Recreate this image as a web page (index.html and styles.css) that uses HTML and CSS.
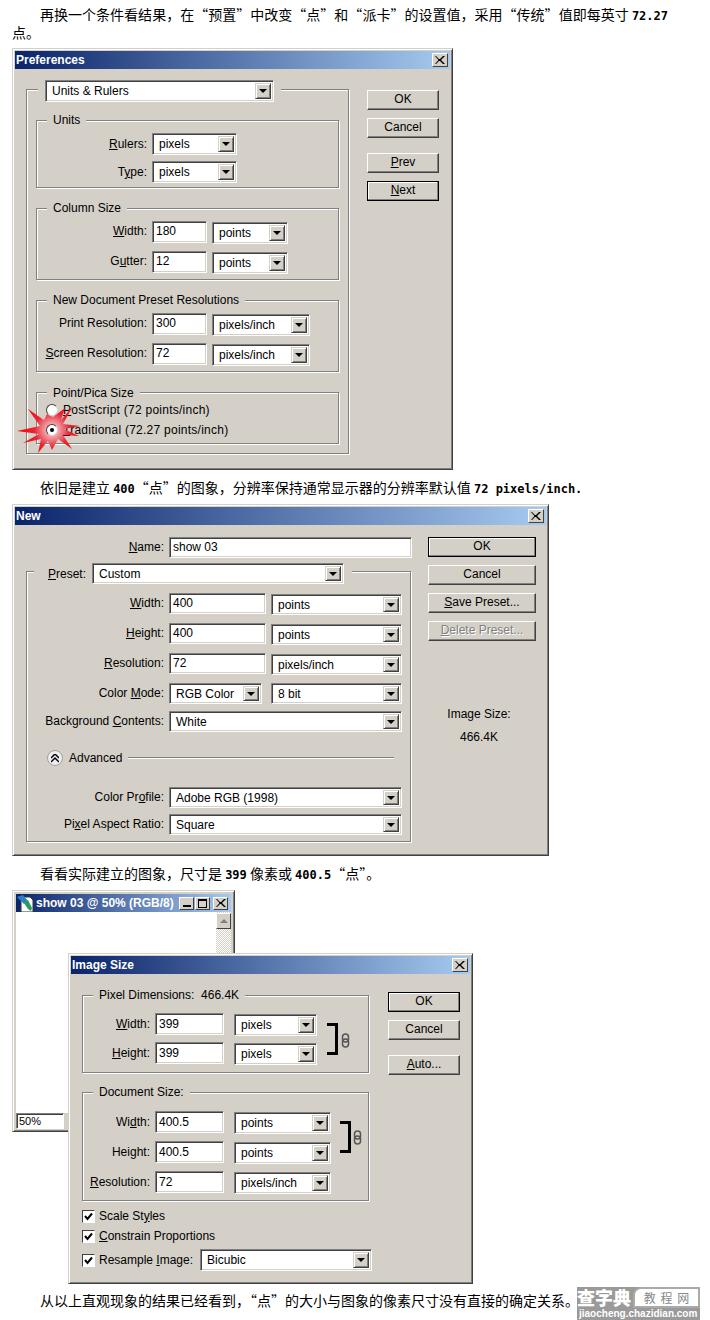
FILE: index.html
```html
<!DOCTYPE html>
<html lang="zh-CN">
<head>
  <meta charset="UTF-8">
  <title>点和像素</title>
  <link rel="stylesheet" href="styles.css">
</head>
<body>
  <p class="para para-first">再换一个条件看结果，在“预置”中改变“点”和“派卡”的设置值，采用“传统”值即每英寸 <b>72.27</b> 点。</p>

  <!-- Preferences -->
  <div class="dialog dialog-prefs">
    <div class="titlebar"><span>Preferences</span><i class="close"><svg width="10" height="8" viewBox="0 0 10 8"><path d="M1 0l3 3h1l3-3h2L6 4l4 4H8L5 5H4L1 8H0l3.500-4L0 0z"/></svg></i></div>
    <div class="dialog-body">
      <div class="group outer prefs-outer">
        <div class="legend legend-select">
          <div class="select w-229"><span>Units &amp; Rulers</span><i class="arrow"></i></div>
        </div>
        <div class="group prefs-group first">
          <div class="legend">Units</div>
          <div class="row"><label class="label l-110"><u>R</u>ulers:</label><div class="select w-85"><span>pixels</span><i class="arrow"></i></div></div>
          <div class="row"><label class="label l-110">T<u>y</u>pe:</label><div class="select w-85"><span>pixels</span><i class="arrow"></i></div></div>
        </div>
        <div class="group prefs-group">
          <div class="legend">Column Size</div>
          <div class="row"><label class="label l-110"><u>W</u>idth:</label><div class="input w-55">180</div><div class="select w-76 low"><span>points</span><i class="arrow"></i></div></div>
          <div class="row"><label class="label l-110">G<u>u</u>tter:</label><div class="input w-55">12</div><div class="select w-76 low"><span>points</span><i class="arrow"></i></div></div>
        </div>
        <div class="group prefs-group">
          <div class="legend">New Document Preset Resolutions</div>
          <div class="row"><label class="label l-110">Print Resolution:</label><div class="input w-55">300</div><div class="select w-98 low"><span>pixels/inch</span><i class="arrow"></i></div></div>
          <div class="row"><label class="label l-110"><u>S</u>creen Resolution:</label><div class="input w-55">72</div><div class="select w-98 low"><span>pixels/inch</span><i class="arrow"></i></div></div>
        </div>
        <div class="group prefs-group radios">
          <div class="legend">Point/Pica Size</div>
          <div class="radio-row"><i class="radio"></i><span><u>P</u>ostScript (72 points/inch)</span></div>
          <div class="radio-row">
            <svg class="star" width="64" height="48" viewBox="0 0 64 48">
              <defs><radialGradient id="burst" cx="35" cy="24" r="32" gradientUnits="userSpaceOnUse"><stop offset="0" stop-color="#fbe4e4"/><stop offset=".3" stop-color="#ee8088"/><stop offset=".55" stop-color="#ea2434"/><stop offset="1" stop-color="#ff0000"/></radialGradient></defs>
              <polygon fill="url(#burst)" points="0,25 23,20 11,3 27,14 30,8 36,11 48,2 44,14 56,0 46,18 63,20 47,23 62,30 46,29 55,43 41,33 35,44 31,35 21,47 24,33 6,37 22,28"/>
            </svg>
            <i class="radio on"></i><span><u>T</u>raditional (72.27 points/inch)</span>
          </div>
        </div>
      </div>
      <div class="buttons prefs-buttons">
        <div class="btn">OK</div>
        <div class="btn">Cancel</div>
        <div class="btn spaced"><u>P</u>rev</div>
        <div class="btn default"><u>N</u>ext</div>
      </div>
    </div>
  </div>

  <p class="para para-second">依旧是建立 <b>400</b>“点”的图象，分辨率保持通常显示器的分辨率默认值 <b>72 pixels/inch.</b></p>

  <!-- New -->
  <div class="dialog dialog-new">
    <div class="titlebar"><span>New</span><i class="close"><svg width="10" height="8" viewBox="0 0 10 8"><path d="M1 0l3 3h1l3-3h2L6 4l4 4H8L5 5H4L1 8H0l3.500-4L0 0z"/></svg></i></div>
    <div class="dialog-body">
      <div class="new-left">
        <div class="row name-row"><label class="label l-138"><u>N</u>ame:</label><div class="input w-243">show 03</div></div>
        <div class="group outer new-outer">
          <div class="legend legend-preset">
            <label class="preset-label"><u>P</u>reset:</label>
            <div class="select w-252"><span>Custom</span><i class="arrow"></i></div>
          </div>
          <div class="row"><label class="label l-137"><u>W</u>idth:</label><div class="input w-97">400</div><div class="select w-131 low"><span>points</span><i class="arrow"></i></div></div>
          <div class="row"><label class="label l-137"><u>H</u>eight:</label><div class="input w-97">400</div><div class="select w-131 low"><span>points</span><i class="arrow"></i></div></div>
          <div class="row"><label class="label l-137"><u>R</u>esolution:</label><div class="input w-97">72</div><div class="select w-131 low"><span>pixels/inch</span><i class="arrow"></i></div></div>
          <div class="row"><label class="label l-137">Color <u>M</u>ode:</label><div class="select w-93"><span>RGB Color</span><i class="arrow"></i></div><div class="select w-131 after-mode"><span>8 bit</span><i class="arrow"></i></div></div>
          <div class="row tight"><label class="label l-137">Background <u>C</u>ontents:</label><div class="select w-233"><span>White</span><i class="arrow"></i></div></div>
          <div class="advanced">
            <i class="round"><svg width="8" height="9" viewBox="0 0 8 9"><path d="M0 4l4-4 4 4M0 8l4-4 4 4" fill="none" stroke="#000" stroke-width="1.500"/></svg></i>
            <span>Advanced</span><i class="etched"></i>
          </div>
          <div class="row profile"><label class="label l-137">Color Pr<u>o</u>file:</label><div class="select w-233"><span>Adobe RGB (1998)</span><i class="arrow"></i></div></div>
          <div class="row aspect"><label class="label l-137">Pi<u>x</u>el Aspect Ratio:</label><div class="select w-233"><span>Square</span><i class="arrow"></i></div></div>
        </div>
      </div>
      <div class="new-right">
        <div class="buttons">
          <div class="btn wide default">OK</div>
          <div class="btn wide">Cancel</div>
          <div class="btn wide"><u>S</u>ave Preset...</div>
          <div class="btn wide disabled"><u>D</u>elete Preset...</div>
        </div>
        <div class="size-info">
          <div>Image Size:</div>
          <div>466.4K</div>
        </div>
      </div>
    </div>
  </div>

  <p class="para para-third">看看实际建立的图象，尺寸是 <b>399</b> 像素或 <b>400.5</b>“点”。</p>

  <div class="desktop">
    <div class="docwin">
      <div class="titlebar doc-title">
        <svg class="doc-icon" width="17" height="18" viewBox="0 0 17 18">
          <path d="M4 3h9l3 3v12H4z" fill="#fff" stroke="#333"/>
          <path d="M0 3l6-2 5 6-4 3z" fill="#2f7fc8"/>
          <path d="M7 9l4-3 4 8-1 3-3-2z" fill="#2c9a58"/>
        </svg>
        <span>show 03 @ 50% (RGB/8)</span>
        <div class="doc-ctrls">
          <i class="ctrl"><em class="min"></em></i>
          <i class="ctrl"><em class="max"></em></i>
          <i class="ctrl ctrl-close"><svg width="10" height="8" viewBox="0 0 10 8"><path d="M1 0l3 3h1l3-3h2L6 4l4 4H8L5 5H4L1 8H0l3.500-4L0 0z"/></svg></i>
        </div>
      </div>
      <div class="doc-main">
        <div class="doc-client"></div>
        <div class="doc-scroll"><i class="scroll-up"></i></div>
      </div>
      <div class="doc-status"><div class="zoom-box">50%</div></div>
    </div>

    <!-- Image Size -->
    <div class="dialog dialog-size">
      <div class="titlebar"><span>Image Size</span><i class="close"><svg width="10" height="8" viewBox="0 0 10 8"><path d="M1 0l3 3h1l3-3h2L6 4l4 4H8L5 5H4L1 8H0l3.500-4L0 0z"/></svg></i></div>
      <div class="dialog-body">
        <div class="size-left">
          <div class="group size-pixels">
            <div class="legend">Pixel Dimensions:&nbsp; 466.4K</div>
            <div class="size-rows">
              <div class="rows">
                <div class="row"><label class="label l-67"><u>W</u>idth:</label><div class="input w-69">399</div><div class="select w-83 gap-10 low"><span>pixels</span><i class="arrow"></i></div></div>
                <div class="row"><label class="label l-67"><u>H</u>eight:</label><div class="input w-69">399</div><div class="select w-83 gap-10 low"><span>pixels</span><i class="arrow"></i></div></div>
              </div>
              <i class="bracket"></i>
              <svg class="link" width="9" height="15" viewBox="0 0 9 15"><rect x="1.500" y="1" width="6" height="8" rx="3" fill="none" stroke="#555" stroke-width="1.500"/><rect x="1.500" y="6" width="6" height="8" rx="3" fill="none" stroke="#555" stroke-width="1.500"/></svg>
            </div>
          </div>
          <div class="group size-doc">
            <div class="legend">Document Size:</div>
            <div class="size-rows">
              <div class="rows">
                <div class="row"><label class="label l-67">Wi<u>d</u>th:</label><div class="input w-69">400.5</div><div class="select w-97 gap-10 low"><span>points</span><i class="arrow"></i></div></div>
                <div class="row"><label class="label l-67">Hei<u>g</u>ht:</label><div class="input w-69">400.5</div><div class="select w-97 gap-10 low"><span>points</span><i class="arrow"></i></div></div>
                <div class="row"><label class="label l-67"><u>R</u>esolution:</label><div class="input w-69">72</div><div class="select w-97 gap-10 low"><span>pixels/inch</span><i class="arrow"></i></div></div>
              </div>
              <i class="bracket doc-bracket"></i>
              <svg class="link doc-link" width="9" height="15" viewBox="0 0 9 15"><rect x="1.500" y="1" width="6" height="8" rx="3" fill="none" stroke="#555" stroke-width="1.500"/><rect x="1.500" y="6" width="6" height="8" rx="3" fill="none" stroke="#555" stroke-width="1.500"/></svg>
            </div>
          </div>
          <div class="checks">
            <div class="check-row"><i class="check"><svg width="9" height="9" viewBox="0 0 9 9"><path d="M1 4l2.500 3L8 1.500" fill="none" stroke="#000" stroke-width="2"/></svg></i><span>Scale St<u>y</u>les</span></div>
            <div class="check-row"><i class="check"><svg width="9" height="9" viewBox="0 0 9 9"><path d="M1 4l2.500 3L8 1.500" fill="none" stroke="#000" stroke-width="2"/></svg></i><span><u>C</u>onstrain Proportions</span></div>
            <div class="check-row resample"><i class="check"><svg width="9" height="9" viewBox="0 0 9 9"><path d="M1 4l2.500 3L8 1.500" fill="none" stroke="#000" stroke-width="2"/></svg></i><span class="check-text">Resample <u>I</u>mage:</span><div class="select w-172"><span>Bicubic</span><i class="arrow"></i></div></div>
          </div>
        </div>
        <div class="buttons size-buttons">
          <div class="btn default">OK</div>
          <div class="btn">Cancel</div>
          <div class="btn spaced"><u>A</u>uto...</div>
        </div>
      </div>
    </div>
  </div>

  <p class="para para-last">从以上直观现象的结果已经看到，“点”的大小与图象的像素尺寸没有直接的确定关系。</p>

  <div class="watermark">
    <div class="wm-top"><span class="wm-big">查字典</span><span class="wm-box">教 程 网</span></div>
    <div class="wm-url">jiaocheng.chazidian.com</div>
  </div>
</body>
</html>
```

FILE: styles.css
```css
* {
  box-sizing: border-box;
}

html,
body {
  margin: 0;
  padding: 0;
}

body {
  position: relative;
  width: 710px;
  height: 1320px;
  overflow: hidden;
  background: #fff;
  color: #000;
  font-family: "Liberation Sans", "Noto Sans CJK SC", sans-serif;
  font-size: 12px;
}

i {
  font-style: normal;
}

/* article text */
.para {
  margin: 0 42px 0 12px;
  font-family: "Noto Sans CJK SC", sans-serif;
  font-size: 14px;
  line-height: 18px;
  text-indent: 28px;
  text-align: justify;
}

.para b {
  font-family: "DejaVu Sans Mono", monospace;
  font-size: 12px;
  font-weight: bold;
  line-height: 1;
}

.para-first {
  padding-top: 5px;
  margin-bottom: 7px;
}

.para-second {
  margin-top: 8px;
  margin-bottom: 8px;
}

.para-third {
  margin-top: 8px;
  margin-bottom: 8px;
}

.para-last {
  margin-top: 7px;
}

/* window chrome */
.dialog {
  margin-left: 12px;
  padding: 2px;
  background: #d4d0c8;
  border: 1px solid;
  border-color: #d4d0c8 #404040 #404040 #d4d0c8;
  box-shadow: inset 1px 1px 0 #fff, inset -1px -1px 0 #808080;
}

.dialog-prefs {
  width: 441px;
  height: 422px;
}

.dialog-new {
  width: 537px;
  height: 352px;
}

.dialog-size {
  position: absolute;
  left: 68px;
  top: 63px;
  margin: 0;
  width: 405px;
  height: 331px;
}

.titlebar {
  display: flex;
  align-items: center;
  justify-content: space-between;
  height: 18px;
  padding: 0 2px 0 1px;
  background: linear-gradient(90deg, #0a246a, #a6caf0);
  color: #fff;
  font-family: "Liberation Sans", sans-serif;
  font-size: 12px;
  font-weight: bold;
}

.close,
.ctrl {
  display: flex;
  align-items: center;
  justify-content: center;
  width: 16px;
  height: 14px;
  background: #d4d0c8;
  border: 1px solid;
  border-color: #fff #404040 #404040 #fff;
}

.dialog-body {
  display: flex;
  align-items: flex-start;
}

/* group boxes */
.group {
  border: 1px solid #808080;
  box-shadow: 1px 1px 0 #fff, inset 1px 1px 0 #fff;
}

.legend {
  width: fit-content;
  height: 14px;
  margin: -8px 0 0 10px;
  padding: 0 6px;
  background: #d4d0c8;
  line-height: 14px;
  position: relative;
}

.legend-select {
  height: 22px;
  margin: -10px 0 0 2px;
  padding: 0 7px;
}

.legend-preset {
  display: flex;
  align-items: center;
  height: 21px;
  margin: -9px 0 0 7px;
  padding: 0 8px 0 14px;
}

.preset-label {
  margin-right: 6px;
}

/* form rows */
.row {
  display: flex;
  align-items: flex-start;
  margin-top: 6px;
}

.label {
  flex: none;
  margin-right: 5px;
  text-align: right;
  line-height: 22px;
  white-space: nowrap;
}

.l-67 { width: 67px; }
.l-110 { width: 110px; }
.l-137 { width: 137px; }
.l-138 { width: 138px; }

.input,
.select {
  flex: none;
  height: 22px;
  background: #fff;
  border: 1px solid;
  border-color: #808080 #fff #fff #808080;
  box-shadow: inset 1px 1px 0 #404040, inset -1px -1px 0 #d4d0c8;
  line-height: 20px;
  white-space: nowrap;
}

.input {
  padding-left: 3px;
}

.prefs-group .input,
.name-row .input,
.new-outer .input {
  line-height: 18px;
}

.prefs-group .label:has(+ .input),
.name-row .label {
  line-height: 20px;
}

.select {
  display: flex;
  justify-content: space-between;
  padding: 2px 2px 2px 6px;
  line-height: 17px;
}

.select.low {
  margin: 1px 0 0 5px;
}

.select.gap-10 {
  margin-left: 10px;
}

.arrow {
  display: flex;
  align-items: center;
  justify-content: center;
  width: 16px;
  background: #d4d0c8;
  border: 1px solid;
  border-color: #d4d0c8 #404040 #404040 #d4d0c8;
  box-shadow: inset 1px 1px 0 #fff, inset -1px -1px 0 #808080;
}

.arrow::after {
  content: "";
  border-style: solid;
  border-width: 4px 4px 0 4px;
  border-color: #000 transparent transparent transparent;
}

.w-55 { width: 55px; }
.w-69 { width: 69px; }
.w-76 { width: 76px; }
.w-83 { width: 83px; }
.w-85 { width: 85px; }
.w-93 { width: 93px; }
.w-97 { width: 97px; }
.w-98 { width: 98px; }
.w-131 { width: 131px; }
.w-172 { width: 172px; }
.w-229 { width: 229px; }
.w-233 { width: 233px; }
.w-243 { width: 243px; }
.w-252 { width: 252px; }

/* buttons */
.buttons {
  display: flex;
  flex-direction: column;
  gap: 8px;
  flex: none;
}

.btn {
  width: 72px;
  height: 20px;
  background: #d4d0c8;
  border: 1px solid;
  border-color: #fff #404040 #404040 #fff;
  box-shadow: inset -1px -1px 0 #808080;
  text-align: center;
  line-height: 17px;
}

.btn.wide {
  width: 108px;
}

.btn.spaced {
  margin-top: 7px;
}

.btn.default {
  border: 1px solid #000;
  box-shadow: inset -1px -1px 0 #808080, inset 1px 1px 0 #fff;
}

.btn.disabled {
  color: #808080;
  text-shadow: 1px 1px 0 #fff;
}

/* preferences */
.prefs-outer {
  flex: none;
  width: 323px;
  height: 365px;
  margin: 20px 0 0 11px;
  padding: 0 9px;
}

.prefs-group {
  margin-top: 20px;
  padding-bottom: 5px;
}

.prefs-group.first {
  margin-top: 18px;
  padding-bottom: 4px;
}

.prefs-group .row + .row {
  margin-top: 7px;
}

.prefs-group.first .row + .row {
  margin-top: 6px;
}

.prefs-buttons {
  margin: 21px 0 0 18px;
}

.radios {
  height: 52px;
  padding: 1px 0 0;
}

.radio-row {
  position: relative;
  display: flex;
  align-items: center;
  height: 20px;
  padding-left: 9px;
  letter-spacing: 0.25px;
}

.radio {
  position: relative;
  z-index: 1;
  flex: none;
  width: 12px;
  height: 12px;
  margin-right: 5px;
  background: #fff;
  border: 1px solid;
  border-color: #404040 #d4d0c8 #d4d0c8 #404040;
  border-radius: 50%;
}

.radio.on::after {
  content: "";
  display: block;
  width: 4px;
  height: 4px;
  margin: 3px;
  background: #000;
  border-radius: 50%;
}

.star {
  position: absolute;
  left: -20px;
  top: -14px;
}

/* new document */
.new-left {
  flex: none;
  width: 386px;
  margin-left: 11px;
}

.name-row {
  margin-top: 12px;
}

.name-row .input,
.new-outer .input,
.new-outer .select {
  height: 21px;
}

.new-outer {
  width: 385px;
  height: 271px;
  margin-top: 13px;
}

.new-outer .row {
  margin-top: 8px;
}

.new-outer .legend + .row {
  margin-top: 9px;
}

.new-outer .row.tight {
  margin-top: 7px;
}

.new-outer .row.profile {
  margin-top: 21px;
}

.new-outer .row.aspect {
  margin-top: 6px;
}

.new-outer .label {
  line-height: 21px;
}

.after-mode {
  margin-left: 9px;
}

.advanced {
  display: flex;
  align-items: center;
  height: 16px;
  margin: 18px 16px 0 20px;
}

.round {
  display: flex;
  align-items: center;
  justify-content: center;
  width: 16px;
  height: 16px;
  margin-right: 6px;
  background: #eee;
  border: 1px solid #a0a0a0;
  border-radius: 50%;
}

.etched {
  flex: 1;
  height: 2px;
  margin-left: 6px;
  border-top: 1px solid #808080;
  border-bottom: 1px solid #fff;
}

.new-right {
  margin: 12px 0 0 16px;
}

.size-info {
  display: flex;
  flex-direction: column;
  align-items: center;
  gap: 9px;
  width: 102px;
  margin-top: 66px;
  line-height: 14px;
}

/* third section */
.desktop {
  position: relative;
  height: 394px;
}

.docwin {
  position: absolute;
  left: 12px;
  top: 0;
  width: 223px;
  height: 242px;
  padding: 3px 3px 2px 3px;
  background: #d4d0c8;
  border: 1px solid;
  border-color: #d4d0c8 #404040 #404040 #d4d0c8;
  box-shadow: inset 1px 1px 0 #fff, inset -1px -1px 0 #808080;
}

.doc-title {
  padding: 0 3px 0 1px;
}

.doc-icon {
  flex: none;
  margin-right: 2px;
}

.doc-title span {
  flex: 1;
  white-space: nowrap;
}

.doc-ctrls {
  display: flex;
  gap: 1px;
}

.ctrl {
  width: 15px;
  height: 13px;
}

.ctrl-close {
  margin-left: 2px;
}

.ctrl .min {
  width: 8px;
  height: 2px;
  margin-top: 6px;
  background: #000;
}

.ctrl .max {
  width: 9px;
  height: 9px;
  border: 1px solid #000;
  border-top-width: 2px;
}

.doc-main {
  display: flex;
  height: 201px;
  background: #fff;
}

.doc-client {
  flex: 1;
}

.doc-scroll {
  width: 15px;
  background: repeating-conic-gradient(#d4d0c8 0 25%, #fff 0 50%) 0 0 / 2px 2px;
}

.scroll-up {
  display: flex;
  align-items: center;
  justify-content: center;
  height: 16px;
  margin-top: 1px;
  background: #d4d0c8;
  border: 1px solid;
  border-color: #fff #404040 #404040 #fff;
}

.scroll-up::after {
  content: "";
  border-style: solid;
  border-width: 0 4px 4px 4px;
  border-color: transparent transparent #808080 transparent;
}

.zoom-box {
  width: 48px;
  height: 16px;
  background: #fff;
  border: 1px solid;
  border-color: #808080 #fff #fff #808080;
  box-shadow: inset 1px 1px 0 #404040;
  padding-left: 2px;
  font-size: 11px;
  line-height: 14px;
}

/* image size */
.size-left {
  flex: none;
  width: 290px;
  margin-left: 11px;
}

.size-pixels,
.size-doc {
  width: 287px;
}

.size-pixels {
  height: 78px;
  margin-top: 21px;
}

.size-doc {
  height: 109px;
  margin-top: 19px;
}

.size-pixels .legend,
.size-doc .legend {
  margin-left: 10px;
}

.size-rows {
  display: flex;
  align-items: flex-start;
}

.rows .row {
  margin-top: 7px;
}

.size-pixels .rows .row:first-child {
  margin-top: 11px;
}

.size-pixels .rows .row:last-child {
  margin-top: 6px;
}

.size-doc .rows .row:first-child {
  margin-top: 12px;
}

.bracket {
  flex: none;
  width: 11px;
  height: 32px;
  margin: 21px 0 0 10px;
  border: 3px solid #000;
  border-left: 0;
}

.link {
  flex: none;
  margin: 31px 0 0 3px;
}

.doc-bracket {
  margin: 22px 0 0 9px;
}

.doc-link {
  margin: 31px 0 0 2px;
}

.checks {
  margin-top: 5px;
}

.check-row {
  display: flex;
  align-items: center;
  height: 20px;
}

.check {
  display: flex;
  align-items: center;
  justify-content: center;
  flex: none;
  width: 13px;
  height: 13px;
  margin-right: 4px;
  background: #fff;
  border: 1px solid;
  border-color: #404040 #fff #fff #404040;
  box-shadow: 1px 1px 0 #d4d0c8;
}

.check-text {
  flex: none;
  white-space: nowrap;
}

.resample {
  height: 24px;
  margin-top: 2px;
}

.resample .select {
  margin-left: 7px;
}

.size-buttons {
  margin: 18px 0 0 16px;
}

/* site logo */
.watermark {
  position: absolute;
  left: 577px;
  top: 1287px;
  width: 123px;
  height: 33px;
  background: #9a9a9a;
  font-family: "Noto Sans CJK SC", sans-serif;
}

.wm-top {
  display: flex;
  height: 21px;
}

.wm-big {
  flex: none;
  width: 56px;
  color: #fff;
  font-size: 18px;
  font-weight: 900;
  line-height: 21px;
  white-space: nowrap;
}

.wm-box {
  flex: 1;
  background: #fff;
  border: 2px solid #aaa;
  border-radius: 8px 0 0 0;
  color: #888;
  font-size: 12px;
  line-height: 17px;
  text-align: center;
  word-spacing: 2px;
}

.wm-url {
  padding-left: 2px;
  color: #fff;
  font-family: "Liberation Sans", sans-serif;
  font-size: 10px;
  font-weight: bold;
  line-height: 12px;
  white-space: nowrap;
}
```
